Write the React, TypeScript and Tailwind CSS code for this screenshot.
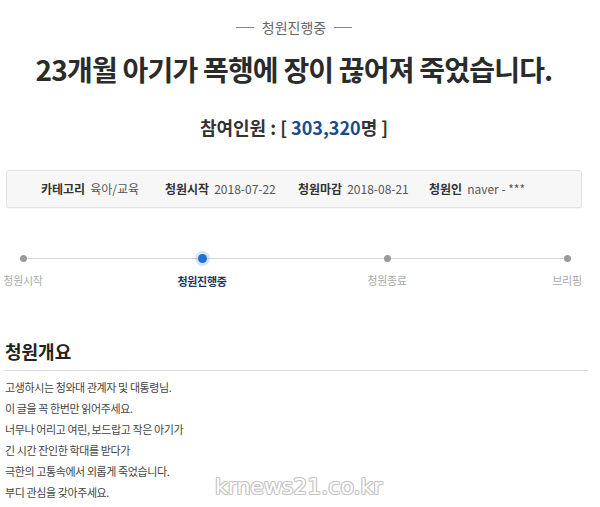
import React from "react"

const font = { fontFamily: '"Noto Sans CJK KR", "Noto Sans", sans-serif' }

const info = [
  { label: "카테고리", value: "육아/교육" },
  { label: "청원시작", value: "2018-07-22" },
  { label: "청원마감", value: "2018-08-21" },
  { label: "청원인", value: "naver - ***" },
]

const steps = [
  { name: "청원시작", cls: "w-[40px]", active: false },
  { name: "청원진행중", cls: "ml-[134px] w-[50px]", active: true },
  { name: "청원종료", cls: "ml-[140px] w-[40px]", active: false },
  { name: "브리핑", cls: "ml-[144px] w-[32px]", active: false },
]

const body = [
  "고생하시는 청와대 관계자 및 대통령님.",
  "이 글을 꼭 한번만 읽어주세요.",
  "너무나 어리고 여린, 보드랍고 작은 아기가",
  "긴 시간 잔인한 학대를 받다가",
  "극한의 고통속에서 외롭게 죽었습니다.",
  "부디 관심을 갖아주세요.",
]

export default function App() {
  return (
    <main className="relative h-[507px] w-[600px] overflow-hidden bg-white" style={font}>
      <div className="w-[588px]">
        {/* status */}
        <div className="flex items-center justify-center gap-[8px] pt-[16px] text-[14px] leading-[22px] text-[#666]">
          <span className="h-px w-[18px] bg-[#888]" />
          <span>청원진행중</span>
          <span className="h-px w-[18px] bg-[#888]" />
        </div>

        <h1 className="mt-[11px] text-center text-[28px] font-bold leading-[40px] tracking-[-0.8px] text-[#2b2b2b]">
          23개월 아기가 폭행에 장이 끊어져 죽었습니다.
        </h1>

        <p className="mt-[25px] text-center text-[18px] font-bold leading-[26px] text-[#333]">
          참여인원 : [ <span className="text-[#1d4a8a]">303,320</span>명 ]
        </p>

        {/* info box */}
        <div className="ml-[6px] mt-[30px] flex h-[38px] w-[576px] items-center rounded-[3px] border border-[#e3e3e3] bg-[#f7f7f7] pl-[34px] text-[12px] shadow-[0_1px_1px_rgba(0,0,0,0.04)]">
          {info.map((it, i) => (
            <div key={i} className={`flex items-center gap-[5px] ${i === 0 ? "w-[124px]" : i === 1 ? "w-[133px]" : i === 2 ? "w-[131px]" : ""}`}>
              <span className="font-bold text-[#333]">{it.label}</span>
              <span className="text-[#555]">{it.value}</span>
            </div>
          ))}
        </div>

        {/* progress */}
        <div className="relative mt-[46px] flex pl-[3px]">
          <div className="absolute left-[22px] top-[4px] h-px w-[545px] bg-[#d6d6d6]" />
          {steps.map((s) => (
            <div key={s.name} className={`relative flex ${s.cls} flex-col items-center`}>
              {s.active ? (
                <span className="h-[9px] w-[9px] rounded-full bg-[#1f6fd6] shadow-[0_0_0_3px_rgba(31,111,214,0.18)]" />
              ) : (
                <span className="mt-[1px] h-[7px] w-[7px] rounded-full bg-[#9a9a9a]" />
              )}
              <span
                className={`mt-[9px] whitespace-nowrap text-[11px] leading-[18px] tracking-[-0.3px] ${
                  s.active ? "font-bold text-[#1e3560]" : "text-[#aaa]"
                }`}
              >
                {s.name}
              </span>
            </div>
          ))}
        </div>

        {/* summary */}
        <div className="ml-[5px] mt-[48px]">
          <h2 className="text-[18px] font-bold leading-[26px] text-[#222]">청원개요</h2>
          <div className="mt-[6px] h-px w-[583px] bg-[#dcdcdc]" />
          <div className="mt-[6px] text-[11px] leading-[21px] tracking-[-0.4px] text-[#444]">
            {body.map((l) => (
              <p key={l}>{l}</p>
            ))}
          </div>
        </div>
      </div>

      {/* watermark */}
      <div
        className="absolute left-[215px] top-[474px] text-[22px] leading-[26px] text-white"
        style={{
          fontFamily: '"DejaVu Sans", sans-serif',
          textShadow:
            "1px 0 #c4c4c4, -1px 0 #c4c4c4, 0 1px #c4c4c4, 0 -1px #c4c4c4, 1px 1px #d4d4d4, -1px -1px #d4d4d4, 1px -1px #d4d4d4, -1px 1px #d4d4d4",
        }}
      >
        krnews21.co.kr
      </div>
    </main>
  )
}
